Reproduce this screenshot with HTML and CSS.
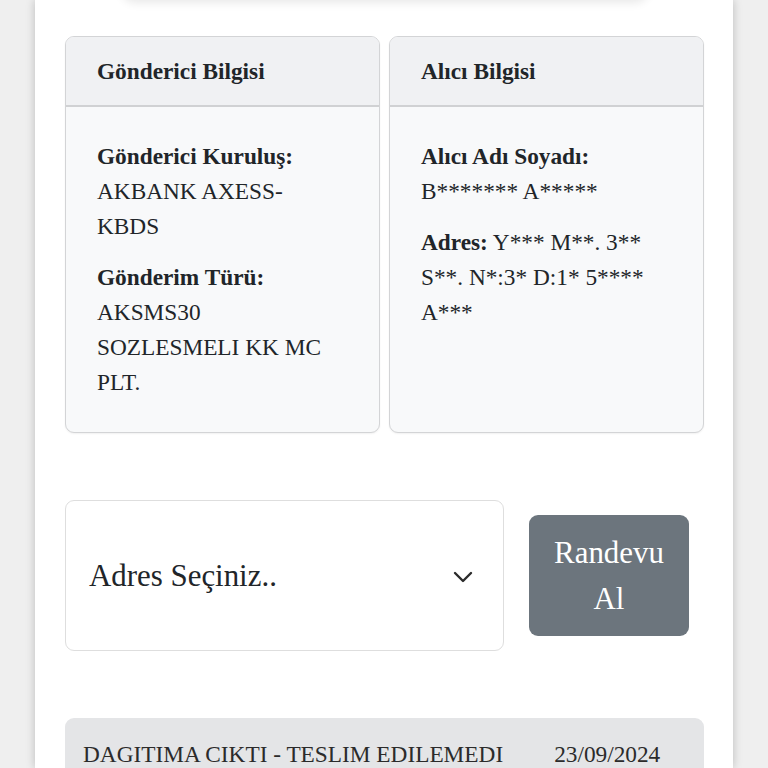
FILE: index.html
```html
<!DOCTYPE html>
<html lang="tr">
<head>
<meta charset="utf-8">
<title>Gönderi Bilgisi</title>
<link rel="stylesheet" href="styles.css">
</head>
<body>
<div class="page">
  <div class="top-card"></div>
  <div class="cards">
    <div class="card">
      <div class="card-header">Gönderici Bilgisi</div>
      <div class="card-body">
        <div class="group">
          <div class="label">Gönderici Kuruluş:</div>
          <div class="value">AKBANK AXESS-KBDS</div>
        </div>
        <div class="group">
          <div class="label">Gönderim Türü:</div>
          <div class="value">AKSMS30 SOZLESMELI KK MC PLT.</div>
        </div>
      </div>
    </div>
    <div class="card">
      <div class="card-header">Alıcı Bilgisi</div>
      <div class="card-body">
        <div class="group">
          <div class="label">Alıcı Adı Soyadı:</div>
          <div class="value">B******* A*****</div>
        </div>
        <div class="group">
          <div class="value"><b class="label-inline">Adres:</b> Y*** M**. 3** S**. N*:3* D:1* 5**** A***</div>
        </div>
      </div>
    </div>
  </div>
  <div class="action-row">
    <div class="select-box">
      <span class="select-text">Adres Seçiniz..</span>
      <svg class="chevron" width="20" height="12" viewBox="0 0 20 12"><polyline points="2,2 10,10 18,2" fill="none" stroke="#2b2b2b" stroke-width="2.4" stroke-linecap="round" stroke-linejoin="round"/></svg>
    </div>
    <div class="btn">Randevu Al</div>
  </div>
  <div class="status-bar">
    <span class="status-text">DAGITIMA CIKTI - TESLIM EDILEMEDI</span>
    <span class="status-date">23/09/2024</span>
  </div>
</div>
</body>
</html>
```
FILE: styles.css
```css
html, body {
  margin: 0;
  padding: 0;
}
body {
  background: #efefef;
  font-family: "Liberation Serif", "Times New Roman", serif;
  color: #212529;
  overflow: hidden;
  height: 768px;
}
.page {
  width: 698px;
  margin-left: 35px;
  height: 768px;
  overflow: hidden;
  background: #ffffff;
  box-sizing: border-box;
  padding: 0 29px 0 30px;
  box-shadow: 0 0 9px rgba(0, 0, 0, 0.22);
}
.top-card {
  width: 530px;
  height: 40px;
  margin: -40px auto 0;
  background: #fff;
  border-radius: 16px;
  box-shadow: 0 3px 10px rgba(0, 0, 0, 0.09);
}
.cards {
  margin-top: 36px;
  display: grid;
  grid-template-columns: 315px 315px;
  column-gap: 9px;
}
.card {
  border: 1px solid #d3d4d6;
  border-radius: 9px;
  overflow: hidden;
  background: #f8f9fa;
  box-shadow: 0 1px 2px rgba(0, 0, 0, 0.06);
}
.card-header {
  height: 68px;
  display: flex;
  align-items: center;
  padding: 0 31px;
  background: #f0f1f3;
  border-bottom: 2px solid #d0d1d3;
  font-weight: bold;
  font-size: 23.3px;
}
.card-body {
  padding: 32px 40px 32px 31px;
  font-size: 23.3px;
  line-height: 35px;
}
.group + .group {
  margin-top: 16px;
}
.label, .label-inline {
  font-weight: bold;
}
.action-row {
  margin-top: 67px;
  display: flex;
  align-items: center;
}
.select-box {
  width: 439px;
  height: 151px;
  box-sizing: border-box;
  border: 1px solid #dedede;
  border-radius: 9px;
  display: flex;
  align-items: center;
  justify-content: space-between;
  padding: 0 30px 0 23px;
  font-size: 30.9px;
}
.chevron {
  display: block;
  margin-top: 2px;
}
.btn {
  margin-left: 25px;
  width: 160px;
  height: 121px;
  box-sizing: border-box;
  padding: 0 20px;
  background: #6c757d;
  color: #ffffff;
  border-radius: 9px;
  font-size: 30.9px;
  line-height: 46px;
  text-align: center;
  display: flex;
  align-items: center;
  justify-content: center;
}
.status-bar {
  margin-top: 67px;
  background: #e4e5e7;
  border-radius: 9px 9px 0 0;
  height: 51px;
  box-sizing: border-box;
  display: flex;
  align-items: flex-start;
  padding: 19px 18px 0;
  font-size: 23.3px;
  line-height: 35px;
  color: #2b2b2b;
}
.status-date {
  margin-left: 51px;
}
```
